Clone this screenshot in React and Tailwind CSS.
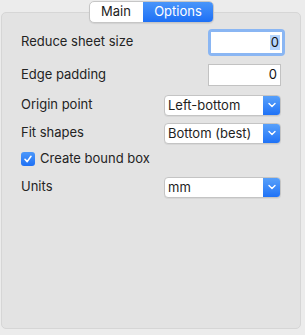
import React from 'react';

const font = { fontFamily: 'Inter, "Liberation Sans", Arial, sans-serif' };

const Chevron = () => (
  <svg width="8" height="6" viewBox="0 0 8 6" fill="none">
    <path d="M1 1.5 L4 4.5 L7 1.5" stroke="white" strokeWidth="1.4" strokeLinecap="round" strokeLinejoin="round" />
  </svg>
);

const Select = ({ value }) => (
  <div className="flex h-[21px] w-[117px] rounded-[4px] border border-[#c4c4c4] bg-white shadow-[0_1px_0_rgba(0,0,0,0.05)] overflow-hidden">
    <div className="flex-1 flex items-center pl-[3px] text-[13px] text-[#1e1e1e] leading-none">{value}</div>
    <div className="w-[18px] -my-px -mr-px flex items-center justify-center rounded-r-[4px] bg-gradient-to-b from-[#5aa2fa] to-[#1b6ff6]">
      <Chevron />
    </div>
  </div>
);

const Row = ({ label, children, className = '' }) => (
  <div className={`flex items-center justify-between h-[22px] ${className}`}>
    <span className="text-[13px] text-[#232323]">{label}</span>
    {children}
  </div>
);

export default function App() {
  return (
    <div className="w-[305px] h-[335px] bg-[#ececec] pt-[1px] pl-[1px] pr-[4px]" style={font}>
      <div className="relative z-10 flex justify-center h-[22px]">
        <div className="flex h-[22px] rounded-[5px] border border-[#c6c6c6] bg-white shadow-[0_1px_1px_rgba(0,0,0,0.08)] overflow-hidden">
          <div className="w-[53px] flex items-center justify-center text-[13px] text-[#1c1c1c]">Main</div>
          <div className="w-[71px] -my-px -mr-px flex items-center justify-center rounded-r-[5px] bg-gradient-to-b from-[#4b97fa] to-[#1a6df5] text-[13px] text-white">Options</div>
        </div>
      </div>
      <div className="-mt-[11px] h-[317px] rounded-[5px] border border-[#d6d6d6] bg-[#e3e3e3] px-[19px] pt-[18px]">
        <Row label="Reduce sheet size">
          <div className="rounded-[4px] p-[3px] bg-[#8ab6f3] -mr-[4px]">
            <div className="w-[71px] h-[21px] bg-white flex items-center justify-end pr-[2px] text-[13px] text-[#111]">
              <span className="bg-[#b4d4fd] px-[1px] leading-[15px]">0</span>
            </div>
          </div>
        </Row>
        <Row label="Edge padding" className="mt-[11px]">
          <div className="w-[73px] h-[22px] bg-white border border-[#c2c2c2] flex items-center justify-end pr-[3px] text-[13px] text-[#111]">0</div>
        </Row>
        <Row label="Origin point" className="mt-[8px]">
          <Select value="Left-bottom" />
        </Row>
        <Row label="Fit shapes" className="mt-[6px]">
          <Select value="Bottom (best)" />
        </Row>
        <div className="flex items-center h-[22px] mt-[4px]">
          <div className="w-[14px] h-[14px] rounded-[3px] bg-gradient-to-b from-[#4c98fa] to-[#1d70f5] flex items-center justify-center">
            <svg width="10" height="10" viewBox="0 0 10 10" fill="none">
              <path d="M2 5.3 L4.2 7.6 L8 2.3" stroke="white" strokeWidth="1.6" strokeLinecap="round" strokeLinejoin="round" />
            </svg>
          </div>
          <span className="ml-[5px] text-[13px] text-[#232323]">Create bound box</span>
        </div>
        <Row label="Units" className="mt-[6px]">
          <Select value="mm" />
        </Row>
      </div>
    </div>
  );
}
